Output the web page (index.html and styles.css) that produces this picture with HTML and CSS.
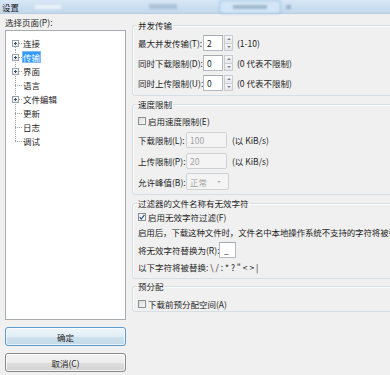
FILE: index.html
```html
<!DOCTYPE html>
<html lang="zh-CN">
<head>
    <meta charset="UTF-8">
    <meta name="viewport" content="width=device-width, initial-scale=1.0">
    <title>设置</title>
    <link rel="stylesheet" href="styles.css">
</head>
<body>

    <div class="titlebar">
        <span class="title">设置</span>
        <span class="ghost ghost-a"></span>
        <span class="ghost ghost-b"></span>
        <span class="ghost ghost-c"><span></span></span>
        <span class="ghost ghost-d"></span>
    </div>

    <div class="dialog">
        <!-- Lista de páginas a la izquierda -->
        <div class="pages">
            <div class="pages-label">选择页面(P):</div>
            <ul class="tree">
                <li class="node first"><span class="line"><span class="expander"></span></span><span class="name">连接</span></li>
                <li class="node selected"><span class="line"><span class="expander"></span></span><span class="name">传输</span></li>
                <li class="node"><span class="line"><span class="expander"></span></span><span class="name">界面</span></li>
                <li class="node"><span class="line"></span><span class="name">语言</span></li>
                <li class="node"><span class="line"><span class="expander"></span></span><span class="name">文件编辑</span></li>
                <li class="node"><span class="line"></span><span class="name">更新</span></li>
                <li class="node"><span class="line"></span><span class="name">日志</span></li>
                <li class="node last"><span class="line"></span><span class="name">调试</span></li>
            </ul>
            <button class="btn btn-ok" type="button">确定</button>
            <button class="btn" type="button">取消(C)</button>
        </div>

        <!-- Opciones de la página "传输" -->
        <div class="options">
            <fieldset class="group group-concurrent">
                <legend>并发传输</legend>
                <div class="row">
                    <label class="lbl lbl-wide">最大并发传输(T):</label>
                    <input class="txt num" type="text" value="2">
                    <span class="spin"><i class="up"></i><i class="down"></i></span>
                    <span class="hint">(1-10)</span>
                </div>
                <div class="row">
                    <label class="lbl lbl-wide">同时下载限制(D):</label>
                    <input class="txt num" type="text" value="0">
                    <span class="spin"><i class="up"></i><i class="down"></i></span>
                    <span class="hint">(0 代表不限制)</span>
                </div>
                <div class="row">
                    <label class="lbl lbl-wide">同时上传限制(U):</label>
                    <input class="txt num" type="text" value="0">
                    <span class="spin"><i class="up"></i><i class="down"></i></span>
                    <span class="hint">(0 代表不限制)</span>
                </div>
            </fieldset>

            <fieldset class="group group-speed">
                <legend>速度限制</legend>
                <div class="row check-row">
                    <span class="check"></span>
                    <span>启用速度限制(E)</span>
                </div>
                <div class="row speed-row">
                    <label class="lbl">下载限制(L):</label>
                    <input class="txt rate" type="text" value="100" disabled>
                    <span class="hint unit">(以 KiB/s)</span>
                </div>
                <div class="row speed-row">
                    <label class="lbl">上传限制(P):</label>
                    <input class="txt rate" type="text" value="20" disabled>
                    <span class="hint unit">(以 KiB/s)</span>
                </div>
                <div class="row speed-row">
                    <label class="lbl">允许峰值(B):</label>
                    <span class="combo">正常<i></i></span>
                </div>
            </fieldset>

            <fieldset class="group group-filter">
                <legend>过滤器的文件名称有无效字符</legend>
                <div class="row check-row">
                    <span class="check checked">
                        <svg width="6" height="6" viewBox="0 0 6 6"><path d="M0.6 3.2 L2.3 5 L5.4 0.8" fill="none" stroke="#2b4f8a" stroke-width="1.2"/></svg>
                    </span>
                    <span>启用无效字符过滤(F)</span>
                </div>
                <div class="row text-row">启用后，下载这种文件时，文件名中本地操作系统不支持的字符将被替</div>
                <div class="row replace-row">
                    <label class="lbl lbl-replace">将无效字符替换为(R):</label>
                    <input class="txt small" type="text" value="_">
                </div>
                <div class="row chars-row">以下字符将被替换: \ / : * ? " &lt; &gt; |</div>
            </fieldset>

            <fieldset class="group group-alloc">
                <legend>预分配</legend>
                <div class="row check-row">
                    <span class="check"></span>
                    <span>下载前预分配空间(A)</span>
                </div>
            </fieldset>
        </div>
    </div>

</body>
</html>
```

FILE: styles.css
```css
html, body {
    margin: 0;
    height: 100%;
    overflow: hidden;
}

body {
    background: #f0f0f0;
    font-family: "Noto Sans CJK SC", "Liberation Sans", sans-serif;
    font-size: 8.5px;
    color: #1e1e1e;
}

/* Barra de título */
.titlebar {
    height: 13px;
    border-bottom: 1px solid #b9cde0;
    background: linear-gradient(#d7e7f6, #c3d8ec);
    display: flex;
    align-items: center;
    padding-left: 2px;
    line-height: 12px;
}

.title {
    color: #151515;
}

.ghost {
    filter: blur(1px);
    flex: none;
}

.ghost-a {
    margin-left: 16px;
    width: 26px;
    height: 4px;
    background: rgba(255, 255, 255, 0.6);
}

.ghost-b {
    margin-left: 88px;
    width: 28px;
    height: 5px;
    background: rgba(80, 110, 140, 0.25);
}

.ghost-c {
    margin-left: 43px;
    width: 60px;
    height: 12px;
    border-radius: 3px;
    background: #d3e6f7;
    box-shadow: 0 0 0 1px rgba(120, 170, 215, 0.6);
    display: flex;
    align-items: center;
    justify-content: center;
}

.ghost-c span {
    width: 34px;
    height: 4px;
    background: rgba(70, 100, 130, 0.35);
}

.ghost-d {
    margin-left: 6px;
    width: 5px;
    height: 4px;
    background: rgba(70, 100, 130, 0.35);
}

.dialog {
    display: flex;
    padding-left: 5px;
}

/* Columna izquierda */
.pages {
    width: 121px;
    flex: none;
    padding-top: 2px;
    display: flex;
    flex-direction: column;
}

.pages-label {
    line-height: 12px;
}

.tree {
    list-style: none;
    margin: 2px 0 0;
    padding: 5px 0 0 2px;
    height: 290px;
    box-sizing: border-box;
    border: 1px solid #a7abb0;
    background: #fff;
}

.node {
    display: flex;
    align-items: center;
    height: 14px;
}

.line {
    width: 14px;
    height: 14px;
    flex: none;
    display: flex;
    align-items: center;
    justify-content: center;
    background:
        repeating-linear-gradient(#a0a0a0 0 1px, transparent 1px 2px) 7px 0 / 1px 14px no-repeat,
        repeating-linear-gradient(90deg, #a0a0a0 0 1px, transparent 1px 2px) 7px 7px / 7px 1px no-repeat;
}

.first .line {
    background:
        repeating-linear-gradient(#a0a0a0 0 1px, transparent 1px 2px) 7px 7px / 1px 7px no-repeat,
        repeating-linear-gradient(90deg, #a0a0a0 0 1px, transparent 1px 2px) 7px 7px / 7px 1px no-repeat;
}

.last .line {
    background:
        repeating-linear-gradient(#a0a0a0 0 1px, transparent 1px 2px) 7px 0 / 1px 8px no-repeat,
        repeating-linear-gradient(90deg, #a0a0a0 0 1px, transparent 1px 2px) 7px 7px / 7px 1px no-repeat;
}

.expander {
    width: 7px;
    height: 7px;
    box-sizing: border-box;
    border: 1px solid #98a2ac;
    margin-left: 1px;
    margin-top: 1px;
    background:
        linear-gradient(#3d5270, #3d5270) center / 3px 1px no-repeat,
        linear-gradient(#3d5270, #3d5270) center / 1px 3px no-repeat,
        linear-gradient(#ffffff, #e4e8ec);
}

.name {
    padding: 0 1px;
    line-height: 12px;
    white-space: nowrap;
}

.selected .name {
    background: #3399ff;
    color: #fff;
    box-shadow: 0 0 0 1px #7cb9f5 inset;
}

.btn {
    margin-top: 7px;
    height: 19px;
    padding: 0;
    border: 1px solid #8a8a8a;
    border-radius: 3px;
    background: linear-gradient(#f4f4f4 0%, #ececec 50%, #dedede 51%, #d3d3d3 100%);
    font: inherit;
    color: #1e1e1e;
    box-shadow: inset 0 0 0 1px rgba(255, 255, 255, 0.7);
}

.btn-ok {
    border-color: #5a9bd0;
    background: linear-gradient(#eef6fb 0%, #e0edf5 50%, #cfe2ee 51%, #c3d9e7 100%);
}

/* Columna derecha */
.options {
    flex: 1;
    margin-left: 6px;
    margin-right: -8px;
    padding-top: 5px;
}

.group {
    margin: 0;
    min-width: 0;
    border: 1px solid #d5dfe5;
    border-radius: 3px;
    box-shadow: inset 1px 1px 0 #fafcfd;
    padding: 0 0 0 5px;
}

.group legend {
    padding: 0 1px;
    margin-left: -1px;
    line-height: 12px;
    color: #1e1e1e;
}

.group-concurrent {
    padding-top: 2px;
    padding-bottom: 2px;
}

.group-speed {
    margin-top: 2px;
    padding-top: 2px;
    padding-bottom: 2px;
}

.group-filter {
    margin-top: 2px;
    padding-bottom: 4px;
}

.group-alloc {
    margin-top: 1px;
    padding-top: 5px;
}

.row {
    display: flex;
    align-items: center;
    white-space: nowrap;
}

.group-concurrent .row {
    height: 20px;
}

.lbl {
    flex: none;
}

.lbl-wide {
    width: 65px;
}

.speed-row {
    height: 21px;
}

.speed-row .lbl {
    width: 48px;
}

.lbl-replace {
    width: 81px;
}

.check-row {
    height: 17px;
}

.group-filter .check-row {
    height: 15px;
}

.group-alloc .check-row {
    height: 14px;
}

.text-row {
    height: 16px;
    letter-spacing: -0.15px;
}

.replace-row {
    height: 20px;
}

.chars-row {
    height: 14px;
}

.check {
    width: 8px;
    height: 8px;
    box-sizing: border-box;
    border: 1px solid #8e8f8f;
    background: linear-gradient(135deg, #d8dadc, #f8f8f8);
    margin-right: 2px;
    flex: none;
    display: flex;
    align-items: center;
    justify-content: center;
}

.checked {
    background: linear-gradient(135deg, #e8ecf2, #ffffff);
}

.txt {
    box-sizing: border-box;
    height: 16px;
    margin: 0;
    padding: 0 3px;
    border: 1px solid #b5b9c0;
    border-top-color: #a5a9b0;
    background: #fff;
    font: inherit;
    color: #1e1e1e;
    flex: none;
    outline: none;
}

.num {
    width: 20px;
}

.rate {
    width: 41px;
    border-radius: 2px;
    border-color: #cfd2d5;
    background: #f4f4f4;
    color: #a3a3a3;
}

.small {
    width: 17px;
    padding: 0 0 0 4px;
}

.spin {
    width: 9px;
    height: 16px;
    margin-left: 1px;
    display: flex;
    flex-direction: column;
    flex: none;
}

.spin i {
    flex: 1;
    border: 1px solid #c9ccd0;
    background: linear-gradient(#f6f6f6, #e4e6e8);
    display: flex;
    align-items: center;
    justify-content: center;
}

.spin i + i {
    border-top: none;
}

.spin .up::before {
    content: "";
    border-left: 2px solid transparent;
    border-right: 2px solid transparent;
    border-bottom: 2px solid #7b8591;
}

.spin .down::before {
    content: "";
    border-left: 2px solid transparent;
    border-right: 2px solid transparent;
    border-top: 2px solid #7b8591;
}

.hint {
    margin-left: 4px;
}

.unit {
    margin-left: 5px;
}

.combo {
    box-sizing: border-box;
    width: 43px;
    height: 17px;
    border: 1px solid #cfd2d5;
    border-radius: 2px;
    background: #f4f4f4;
    color: #a3a3a3;
    padding-left: 3px;
    display: flex;
    align-items: center;
    justify-content: space-between;
}

.combo i {
    margin-right: 7px;
    border-left: 2px solid transparent;
    border-right: 2px solid transparent;
    border-top: 2px solid #b5b5b5;
}
```
